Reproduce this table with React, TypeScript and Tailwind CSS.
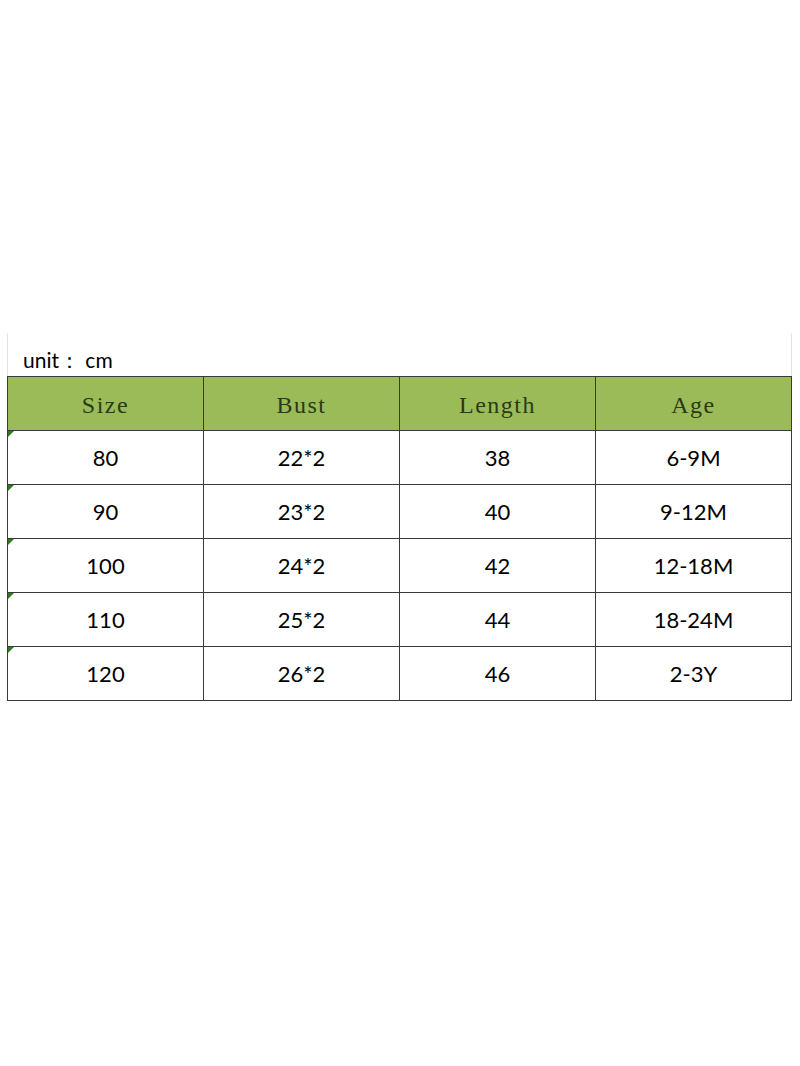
import React from "react";

const headers = ["Size", "Bust", "Length", "Age"];

const rows = [
  ["80", "22*2", "38", "6-9M"],
  ["90", "23*2", "40", "9-12M"],
  ["100", "24*2", "42", "12-18M"],
  ["110", "25*2", "44", "18-24M"],
  ["120", "26*2", "46", "2-3Y"],
];

export default function App() {
  return (
    <div className="w-[800px] h-[1066px] bg-white pt-[333px]">
      <div className="ml-[7px] w-[785px]">
        {/* unit caption */}
        <div className="h-[43px] border-l border-r border-[#e4e4e4] flex items-end pl-[15px] pb-[6px]">
          <span
            className="text-[21px] text-black leading-none"
            style={{ fontFamily: "Lato, 'Open Sans', sans-serif" }}
          >
            unit：&nbsp;cm
          </span>
        </div>

        {/* table */}
        <div className="border-l-[1.5px] border-t-[1.5px] border-[#3a3a3a]">
          <div className="grid grid-cols-4 h-[54px] bg-[#9bbb59]">
            {headers.map((h) => (
              <div
                key={h}
                className="flex items-center justify-center pt-[2px] border-r-[1.5px] border-b-[1.5px] border-[#3a3a3a] text-[24px] text-[#2a3a14] tracking-[1.5px]"
                style={{ fontFamily: "'Liberation Serif', 'DejaVu Serif', serif" }}
              >
                {h}
              </div>
            ))}
          </div>
          {rows.map((r, i) => (
            <div key={i} className="relative grid grid-cols-4 h-[54px]">
              <div className="absolute left-0 top-0 w-0 h-0 border-t-[6px] border-r-[6px] border-t-[#2f7a1f] border-r-transparent" />
              {r.map((c, j) => (
                <div
                  key={j}
                  className="flex items-center justify-center border-r-[1.5px] border-b-[1.5px] border-[#3a3a3a] text-[22px] text-black"
                  style={{ fontFamily: "Lato, 'Open Sans', sans-serif" }}
                >
                  {c}
                </div>
              ))}
            </div>
          ))}
        </div>
      </div>
    </div>
  );
}
